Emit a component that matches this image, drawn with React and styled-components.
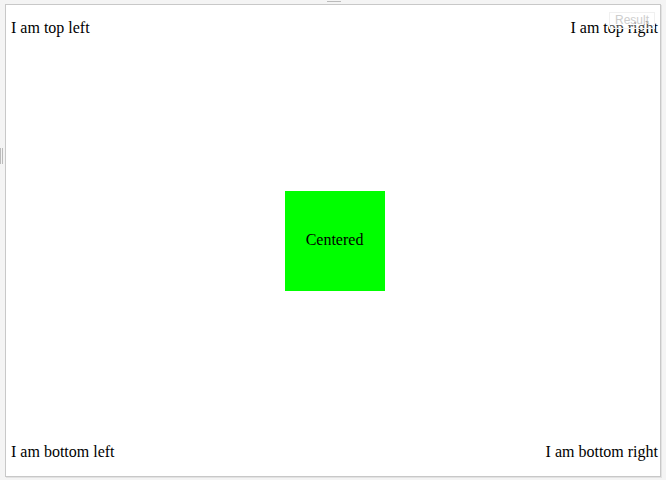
import React from 'react';
import styled, { createGlobalStyle } from 'styled-components';

const GlobalStyle = createGlobalStyle`
  html, body {
    margin: 0;
    padding: 0;
    background: #f4f4f4;
    width: 666px;
    height: 480px;
    overflow: hidden;
  }
`;

const Frame = styled.div`
  position: relative;
  width: 666px;
  height: 480px;
  padding: 4px 5px 0 5px;
  box-sizing: border-box;
`;

const Panel = styled.div`
  position: relative;
  width: 656px;
  height: 473px;
  box-sizing: border-box;
  background: #fff;
  border: 1px solid #c8c8c8;
  box-shadow: 1px 1px 0 #e2e2e2;
  display: grid;
  grid-template-columns: 1fr;
  grid-template-rows: 1fr;
  padding: 14px 2px 15px 5px;
  font-family: "Liberation Serif", "Times New Roman", serif;
  font-size: 16px;
  color: #000;
`;

const Corner = styled.div`
  grid-area: 1 / 1;
  align-self: ${({ $v }) => ($v === 'top' ? 'start' : 'end')};
  justify-self: ${({ $h }) => ($h === 'left' ? 'start' : 'end')};
  line-height: 18px;
`;

const CenterBox = styled.div`
  grid-area: 1 / 1;
  align-self: center;
  justify-self: center;
  width: 100px;
  height: 100px;
  margin: 1px 0 0 0;
  background: #00ff00;
  display: flex;
  align-items: center;
  justify-content: center;
  padding-bottom: 2px;
  box-sizing: border-box;
`;

const ResultTag = styled.div`
  position: absolute;
  top: 7px;
  right: 5px;
  padding: 1px 5px;
  border: 1px solid #f0f0f0;
  font-family: "Liberation Sans", Arial, sans-serif;
  font-size: 12px;
  line-height: 13px;
  color: #cdcdcd;
  background: rgba(255, 255, 255, 0.3);
`;

const TopHandle = styled.div`
  position: absolute;
  top: 1px;
  left: 327px;
  width: 14px;
  height: 1px;
  background: #bbb;
`;

const SideHandle = styled.div`
  position: absolute;
  top: 148px;
  left: 0;
  width: 3px;
  height: 16px;
  border-left: 1px solid #bbb;
  border-right: 1px solid #bbb;
  box-sizing: border-box;
`;

const App = () => {
  const corners = [
    { v: 'top', h: 'left', text: 'I am top left' },
    { v: 'top', h: 'right', text: 'I am top right' },
    { v: 'bottom', h: 'left', text: 'I am bottom left' },
    { v: 'bottom', h: 'right', text: 'I am bottom right' },
  ];
  return (
    <>
      <GlobalStyle />
      <Frame>
        <TopHandle />
        <SideHandle />
        <Panel>
          {corners.map((c) => (
            <Corner key={c.text} $v={c.v} $h={c.h}>{c.text}</Corner>
          ))}
          <CenterBox>Centered</CenterBox>
          <ResultTag>Result</ResultTag>
        </Panel>
      </Frame>
    </>
  );
};

export default App;
